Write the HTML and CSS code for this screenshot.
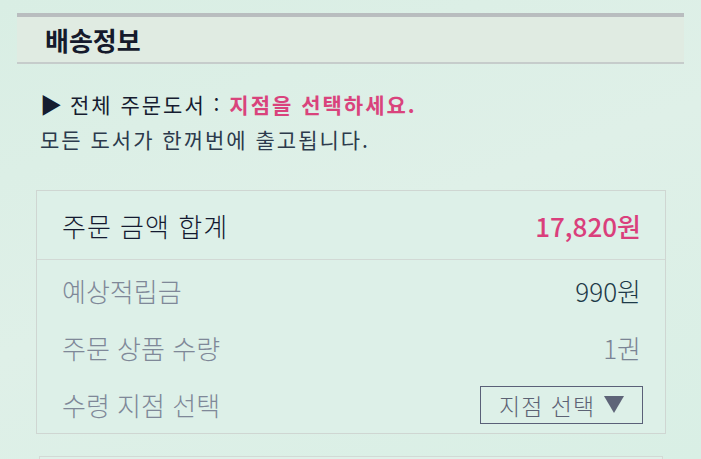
FILE: index.html
```html
<!DOCTYPE html>
<html lang="ko">
<head>
    <meta charset="UTF-8">
    <meta name="viewport" content="width=device-width, initial-scale=1.0">
    <title>배송정보</title>
    <link rel="stylesheet" href="styles.css">
</head>
<body>
    <div class="page">
        <!-- 제목 -->
        <div class="section-title">배송정보</div>

        <div class="notice">
            <p class="notice-line"><span class="arrow">▶</span> 전체 주문도서 : <span class="pink">지점을 선택하세요.</span></p>
            <p class="notice-line sub">모든 도서가 한꺼번에 출고됩니다.</p>
        </div>

        <!-- 주문 요약 -->
        <div class="summary">
            <div class="summary-total">
                <span>주문 금액 합계</span>
                <span class="total-price">17,820원</span>
            </div>
            <div class="summary-rows">
                <div class="row">
                    <span class="label">예상적립금</span>
                    <span class="value dark">990원</span>
                </div>
                <div class="row">
                    <span class="label">주문 상품 수량</span>
                    <span class="value">1권</span>
                </div>
                <div class="row">
                    <span class="label">수령 지점 선택</span>
                    <button class="branch-button">지점 선택
                        <svg width="20" height="17" viewBox="0 0 20 17"><polygon points="0,0 20,0 10,17" fill="#5e6478"/></svg>
                    </button>
                </div>
            </div>
        </div>

        <div class="next-box"></div>
    </div>
</body>
</html>
```

FILE: styles.css
```css
/* 기본 스타일 */
body, html {
    margin: 0;
    padding: 0;
    height: 100%;
    overflow: hidden;
    font-family: 'Noto Sans CJK KR', 'Noto Sans', sans-serif;
    background: linear-gradient(160deg, #d9eee4 0%, #dff0e8 50%, #d9efe5 100%);
    color: #1a2238;
}

.page {
    padding: 13px 17px 0 17px;
}

/* 제목 바 */
.section-title {
    height: 45px;
    line-height: 45px;
    padding-left: 28px;
    border-top: 4px solid #b9bdbf;
    border-bottom: 2px solid #c6cccb;
    background-color: #e0ebe2;
    font-size: 26px;
    font-weight: bold;
    color: #151a2c;
}

.notice {
    margin: 21px 0 0 23px;
}

.notice-line {
    margin: 0;
    height: 36px;
    line-height: 36px;
    font-size: 21px;
    letter-spacing: 2px;
    color: #161c30;
}

.arrow {
    font-size: 22px;
    letter-spacing: 0;
}

.notice-line.sub {
    color: #2c3a4c;
}

.pink {
    color: #d9437c;
    font-weight: bold;
}

/* 주문 요약 박스 */
.summary {
    margin: 33px 18px 0 19px;
    border: 1px solid #cfd6d2;
    background-color: #ddf0e8;
}

.summary-total {
    display: flex;
    justify-content: space-between;
    align-items: center;
    height: 68px;
    padding: 0 24px 0 25px;
    border-bottom: 1px solid #d2d9d5;
    font-size: 26px;
    font-weight: 300;
    letter-spacing: 1px;
    color: #141a30;
}

.total-price {
    color: #da3f7c;
    font-weight: 500;
    font-size: 26px;
    letter-spacing: 0;
}

.summary-rows {
    padding: 2px 0 0 0;
}

.row {
    display: flex;
    justify-content: space-between;
    align-items: center;
    height: 57px;
    padding: 0 22px 0 25px;
    font-size: 26px;
    font-weight: 300;
}

.label {
    color: #7f8898;
}

.value {
    color: #7a8494;
    margin-right: 2px;
}

.value.dark {
    color: #1d3a48;
}

.branch-button {
    display: flex;
    align-items: center;
    gap: 9px;
    width: 163px;
    height: 38px;
    padding: 0 0 0 18px;
    border: 1.5px solid #5a6078;
    background: transparent;
    font-family: inherit;
    font-size: 23px;
    font-weight: 300;
    letter-spacing: 1px;
    color: #5c6274;
}

.next-box {
    margin: 22px 21px 0 22px;
    height: 20px;
    border: 1px solid #d3d9d5;
    background-color: #dff1e9;
}
```
